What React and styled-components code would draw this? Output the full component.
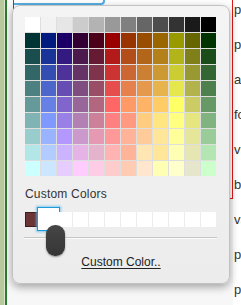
import React from 'react';
import styled, { createGlobalStyle } from 'styled-components';

const GlobalStyle = createGlobalStyle`
  html, body {
    margin: 0;
    padding: 0;
    background: #ffffff;
    overflow: hidden;
  }
`;

const Page = styled.div`
  position: relative;
  display: flex;
  width: 241px;
  height: 305px;
  overflow: hidden;
  font-family: "Liberation Sans", Arial, sans-serif;
`;

const Rail = styled.div`
  flex: 0 0 7px;
  background: linear-gradient(
    to right,
    #b6ca9b 0,
    #b6ca9b 4px,
    #dce6d0 4px,
    #dce6d0 5px,
    #2d7a32 5px,
    #2d7a32 7px
  );
`;

const Main = styled.div`
  flex: 0 0 226px;
  background: #f7f7f7;
  padding-left: 6px;
  box-sizing: border-box;
`;

const Outline = styled.div`
  height: 199px;
  border: 1px solid #e01818;
  border-top: none;
  box-sizing: border-box;
  background: #ffffff;
`;

const Input = styled.div`
  width: 89px;
  height: 3px;
  border-bottom: 2px solid #58b0e4;
  border-right: 2px solid #58b0e4;
  border-bottom-right-radius: 4px;
`;

const Labels = styled.div`
  display: flex;
  flex-direction: column;
  margin-top: -8px;
  padding-left: 1px;
  white-space: nowrap;
`;

const Label = styled.div`
  height: 35px;
  line-height: 35px;
  font-size: 13px;
  color: #333333;
`;

const Popup = styled.div`
  position: absolute;
  left: 12px;
  top: 5px;
  width: 218px;
  height: 279px;
  box-sizing: border-box;
  padding: 11px 0 0 12px;
  border: 1px solid #c2c2c2;
  border-radius: 8px;
  background: linear-gradient(#f4f4f4, #ececec);
  box-shadow: 0 3px 8px rgba(0, 0, 0, 0.35);
  display: flex;
  flex-direction: column;
`;

const Swatches = styled.div`
  display: grid;
  grid-template-columns: repeat(12, 15px);
  grid-auto-rows: 15px;
  gap: 1px;
  width: 191px;
  background: #dedede;
`;

const Swatch = styled.div`
  background: ${(p) => p.$color};
`;

const Caption = styled.div`
  margin-top: 11px;
  font-size: 12px;
  line-height: 14px;
  color: #333333;
  letter-spacing: 0.2px;
`;

const CustomRow = styled.div`
  display: grid;
  grid-template-columns: repeat(12, 15px);
  grid-auto-rows: 15px;
  gap: 1px;
  width: 191px;
  margin-top: 11px;
  background: #ececec;
`;

const CustomCell = styled.div`
  position: relative;
  background: ${(p) => p.$color || '#ffffff'};
  box-shadow: ${(p) => (p.$color ? 'inset 0 0 0 1px #3d1c1c' : 'none')};

  &::after {
    content: ${(p) => (p.$selected ? "''" : 'none')};
    position: absolute;
    inset: -5px -4px -4px -4px;
    background: #ffffff;
    border: 1px solid #1d9bd8;
    box-shadow: 0 0 2px 1px rgba(90, 185, 235, 0.7);
  }
`;

const Divider = styled.div`
  width: 193px;
  height: 1px;
  margin: 10px 0 0 -1px;
  background: #c6c6c6;
  border-bottom: 1px solid #fafafa;
`;

const MoreButton = styled.div`
  align-self: center;
  margin: 16px 0 0 -12px;
  font-size: 12px;
  line-height: 14px;
  color: #222222;
  text-decoration: underline;
  text-underline-offset: 2px;
`;

const Handle = styled.div`
  position: absolute;
  left: 33px;
  top: 219px;
  width: 19px;
  height: 31px;
  border-radius: 9px;
  background: linear-gradient(#464646, #353535);
  box-shadow: 0 1px 2px rgba(0, 0, 0, 0.4);
`;

const palette = [
  ['#ffffff', '#f2f2f2', '#e6e6e6', '#cccccc', '#b3b3b3', '#999999', '#808080', '#666666', '#4d4d4d', '#333333', '#1a1a1a', '#000000'],
  ['#003333', '#001a80', '#1a0066', '#330033', '#4d001a', '#990000', '#993300', '#994d00', '#996600', '#999900', '#666600', '#003300'],
  ['#1a4d4d', '#1a3399', '#331a80', '#4d1a4d', '#661a33', '#b31a1a', '#b34d1a', '#b3661a', '#b3801a', '#b3b31a', '#80801a', '#1a4d1a'],
  ['#336666', '#334db3', '#4d3399', '#663366', '#80334d', '#cc3333', '#cc6633', '#cc8033', '#cc9933', '#cccc33', '#999933', '#336633'],
  ['#4d8080', '#4d66cc', '#664db3', '#804d80', '#994d66', '#e64d4d', '#e6804d', '#e6994d', '#e6b34d', '#e6e64d', '#b3b34d', '#4d804d'],
  ['#669999', '#6680e6', '#8066cc', '#996699', '#b36680', '#ff6666', '#ff9966', '#ffb366', '#ffcc66', '#ffff66', '#cccc66', '#669966'],
  ['#80b3b3', '#8099ff', '#9980e6', '#b380b3', '#cc8099', '#ff8080', '#ff9980', '#ffcc80', '#ffe680', '#ffff80', '#e6e680', '#80b380'],
  ['#99cccc', '#99b3ff', '#b399ff', '#cc99cc', '#e699b3', '#ff9999', '#ffb399', '#ffcc99', '#ffe699', '#ffff99', '#e6e699', '#99cc99'],
  ['#b3e6e6', '#b3ccff', '#ccb3ff', '#e6b3e6', '#e6b3cc', '#ffb3b3', '#ffb399', '#ffe6b3', '#ffe699', '#ffffb3', '#e6e6b3', '#b3e6b3'],
  ['#ccffff', '#cce6ff', '#e6ccff', '#ffccff', '#ffcce6', '#ffcccc', '#ffccb3', '#ffe6cc', '#ffffb3', '#ffffcc', '#e6e6cc', '#ccffcc'],
];

const custom = ['#6b3535', null, null, null, null, null, null, null, null, null, null, null];

const words = ['pr', 'pr', 'ar', 'fo', 'vi', 'bl', 'va', 'pr', 'pr'];

export default function App() {
  return (
    <Page>
      <GlobalStyle />
      <Rail />
      <Main>
        <Outline>
          <Input />
        </Outline>
      </Main>
      <Labels>
        {words.map((w, i) => (
          <Label key={i}>{w}</Label>
        ))}
      </Labels>

      <Popup>
        <Swatches>
          {palette.flat().map((c, i) => (
            <Swatch key={i} $color={c} />
          ))}
        </Swatches>
        <Caption>Custom Colors</Caption>
        <CustomRow>
          {custom.map((c, i) => (
            <CustomCell key={i} $color={c} $selected={i === 1} />
          ))}
        </CustomRow>
        <Divider />
        <MoreButton>Custom Color..</MoreButton>
        <Handle />
      </Popup>
    </Page>
  );
}
